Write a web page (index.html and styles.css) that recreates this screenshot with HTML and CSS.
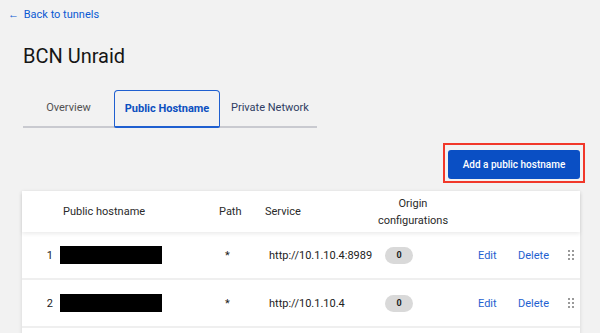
FILE: index.html
```html
<!DOCTYPE html>
<html lang="en">
<head>
    <meta charset="UTF-8">
    <meta name="viewport" content="width=device-width, initial-scale=1.0">
    <title>BCN Unraid - Tunnel</title>
    <link rel="stylesheet" href="styles.css">
</head>
<body>
    <a class="back-link" href="#"><span class="arrow">&larr;</span> Back to tunnels</a>

    <h1 class="title">BCN Unraid</h1>

    <div class="tabs">
        <div class="tab tab-overview">Overview</div>
        <div class="tab tab-active">Public Hostname</div>
        <div class="tab tab-private">Private Network</div>
    </div>

    <div class="actions">
        <div class="highlight">
            <button type="button" class="primary-btn">Add a public hostname</button>
        </div>
    </div>

    <div class="card">
        <div class="row head">
            <div class="col-num"></div>
            <div class="col-host">Public hostname</div>
            <div class="col-path">Path</div>
            <div class="col-service">Service</div>
            <div class="col-origin">Origin<br>configurations</div>
        </div>
        <div class="row">
            <div class="col-num">1</div>
            <div class="col-host"><span class="redacted"></span></div>
            <div class="col-path">*</div>
            <div class="col-service">http://10.1.10.4:8989</div>
            <div class="col-origin"><span class="badge">0</span></div>
            <div class="col-edit"><a href="#">Edit</a></div>
            <div class="col-delete"><a href="#">Delete</a></div>
            <div class="col-drag">
                <svg width="6" height="10" viewBox="0 0 6 10">
                    <rect x="0" y="0" width="2" height="2"/><rect x="4" y="0" width="2" height="2"/>
                    <rect x="0" y="4" width="2" height="2"/><rect x="4" y="4" width="2" height="2"/>
                    <rect x="0" y="8" width="2" height="2"/><rect x="4" y="8" width="2" height="2"/>
                </svg>
            </div>
        </div>
        <div class="row">
            <div class="col-num">2</div>
            <div class="col-host"><span class="redacted"></span></div>
            <div class="col-path">*</div>
            <div class="col-service">http://10.1.10.4</div>
            <div class="col-origin"><span class="badge">0</span></div>
            <div class="col-edit"><a href="#">Edit</a></div>
            <div class="col-delete"><a href="#">Delete</a></div>
            <div class="col-drag">
                <svg width="6" height="10" viewBox="0 0 6 10">
                    <rect x="0" y="0" width="2" height="2"/><rect x="4" y="0" width="2" height="2"/>
                    <rect x="0" y="4" width="2" height="2"/><rect x="4" y="4" width="2" height="2"/>
                    <rect x="0" y="8" width="2" height="2"/><rect x="4" y="8" width="2" height="2"/>
                </svg>
            </div>
        </div>
        <div class="row"></div>
    </div>
</body>
</html>
```

FILE: styles.css
```css
/* tunnel detail page */
body {
    font-family: Roboto, "Noto Sans", sans-serif;
    background-color: #f2f2f2;
    color: #1d1d1d;
    margin: 0;
    padding: 8px 21px 0 23px;
    height: 333px;
    box-sizing: border-box;
    overflow: hidden;
}
.back-link {
    display: block;
    margin-left: -15px;
    font-size: 11px;
    line-height: 14px;
    color: #0b5ad3;
    text-decoration: none;
}
.back-link .arrow {
    margin-right: 2px;
}
.title {
    font-size: 20px;
    font-weight: 400;
    margin: 21px 0 0;
    line-height: 26px;
    color: #161616;
}
.tabs {
    display: flex;
    width: 294px;
    margin-top: 21px;
    border-bottom: 2px solid #c9cad0;
}
.tab {
    font-size: 11px;
    line-height: 35px;
    height: 35px;
    margin-bottom: -2px;
    color: #515151;
}
.tab-overview {
    width: 91px;
    text-align: center;
}
.tab-active {
    width: 104px;
    text-align: center;
    font-weight: 700;
    color: #0b4fc0;
    border: 1px solid #1f5fd0;
    border-bottom-width: 2px;
    border-radius: 4px 4px 2px 2px;
}
.tab-private {
    padding-left: 11px;
    color: #2f3d63;
}
.actions {
    display: flex;
    justify-content: flex-end;
    margin-top: 15px;
}
.highlight {
    border: 2px solid #f1382a;
    padding: 5px 3px 2px 3px;
    margin-right: -6px;
}
.primary-btn {
    display: block;
    width: 132px;
    height: 29px;
    background-color: #0a4fc4;
    color: #fff;
    border: none;
    border-radius: 3px;
    font-family: inherit;
    font-size: 10px;
    font-weight: 500;
    cursor: pointer;
}
.card {
    margin-top: 8px;
    margin-left: -1px;
    margin-right: -1px;
    background-color: #fff;
    box-shadow: 0 1px 4px rgba(0, 0, 0, 0.12);
}
.row {
    display: flex;
    align-items: center;
    height: 48px;
    box-sizing: border-box;
    font-size: 11px;
    border-bottom: 2px solid #efefef;
    color: #222;
}
.row.head {
    height: 41px;
    border-bottom: none;
    box-shadow: 0 2px 4px rgba(0, 0, 0, 0.08);
    position: relative;
    color: #2a2a2a;
}
.col-num {
    width: 38px;
    text-align: right;
    padding-right: 7px;
    box-sizing: border-box;
}
.col-host {
    width: 153px;
}
.head .col-host {
    padding-left: 3px;
    box-sizing: border-box;
}
.redacted {
    display: block;
    width: 102px;
    height: 18px;
    background-color: #000;
}
.col-path {
    width: 52px;
    padding-left: 12px;
    box-sizing: border-box;
}
.head .col-path {
    padding-left: 6px;
}
.col-service {
    width: 104px;
    white-space: nowrap;
}
.row .col-service {
    padding-left: 4px;
    box-sizing: border-box;
}
.head .col-service {
    padding-left: 0;
}
.col-origin {
    width: 88px;
    text-align: center;
    line-height: 17px;
}
.badge {
    display: inline-block;
    width: 28px;
    height: 17px;
    line-height: 17px;
    border-radius: 9px;
    background-color: #d9d9d9;
    font-size: 9px;
    font-weight: 700;
    margin-left: -28px;
}
.col-edit {
    width: 61px;
    padding-left: 21px;
    box-sizing: border-box;
}
.col-delete {
    width: 50px;
}
.col-edit a, .col-delete a {
    color: #1f5fd0;
    text-decoration: none;
}
.col-drag {
    display: flex;
    fill: #9a9a9a;
}
```
